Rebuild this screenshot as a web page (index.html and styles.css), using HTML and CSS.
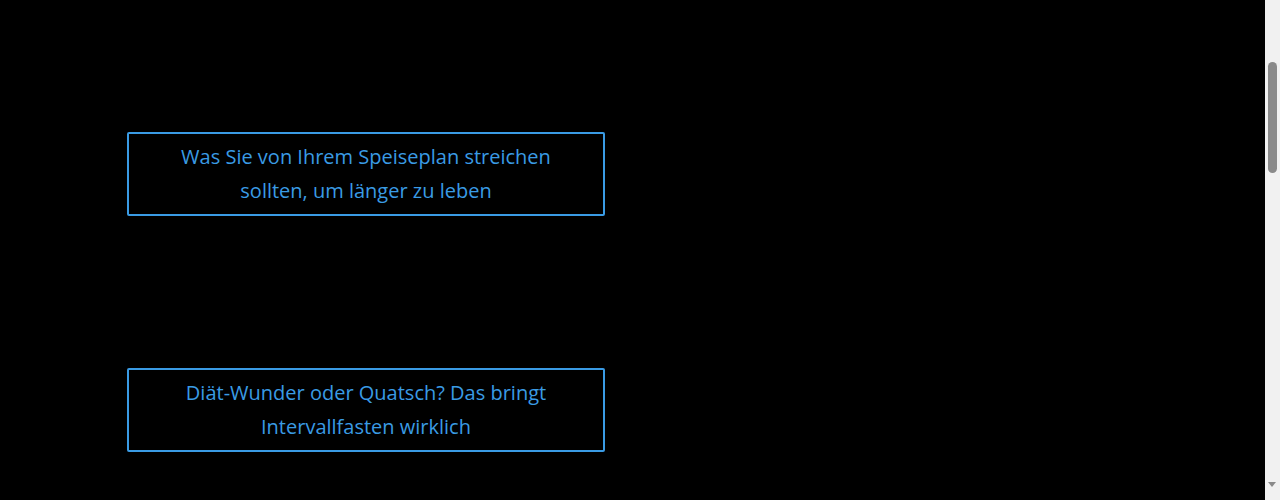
FILE: index.html
```html
<!DOCTYPE html>
<html lang="de">
<head>
<meta charset="utf-8">
<title>Artikel</title>
<link rel="stylesheet" href="styles.css">
</head>
<body>
<main class="page">
  <ul class="list">
    <li class="item"><a class="card" href="#">Was Sie von Ihrem Speiseplan streichen sollten, um länger zu leben</a></li>
    <li class="item"><a class="card" href="#">Diät-Wunder oder Quatsch? Das bringt Intervallfasten wirklich</a></li>
  </ul>
</main>
<div class="scrollbar" aria-hidden="true">
  <div class="thumb"></div>
  <div class="arrow-down"></div>
</div>
</body>
</html>
```
FILE: styles.css
```css
html, body {
  margin: 0;
  padding: 0;
  background: #000;
  overflow: hidden;
}
.page {
  padding: 132px 0 0 127px;
}
.list {
  list-style: none;
  margin: 0;
  padding: 0;
  display: flex;
  flex-direction: column;
  gap: 152px;
}
.item {
  width: 478px;
}
.card {
  display: block;
  box-sizing: border-box;
  width: 478px;
  height: 84px;
  padding: 6px 30px;
  border: 2px solid #3a9be4;
  border-radius: 2px;
  color: #3a9be4;
  text-decoration: none;
  text-align: center;
  font-family: "Open Sans", "Noto Sans", sans-serif;
  font-size: 20px;
  line-height: 34px;
}
.scrollbar {
  position: fixed;
  top: 0;
  right: 0;
  width: 15px;
  height: 100%;
  background: #f1f1f1;
}
.thumb {
  position: absolute;
  top: 62px;
  left: 3px;
  width: 9px;
  height: 111px;
  border-radius: 5px;
  background: #8a8a8a;
}
.arrow-down {
  position: absolute;
  left: 3px;
  bottom: 13px;
  width: 0;
  height: 0;
  border-left: 4.5px solid transparent;
  border-right: 4.5px solid transparent;
  border-top: 5px solid #8a8a8a;
}
```
